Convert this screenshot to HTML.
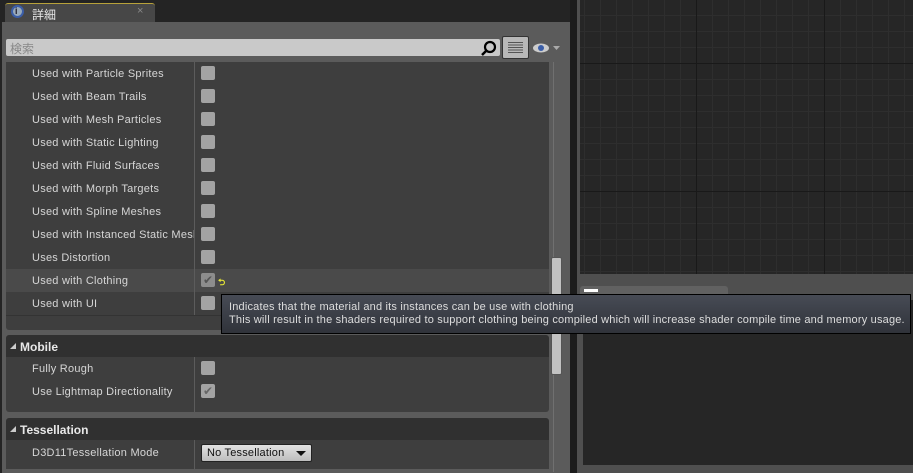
<!DOCTYPE html><html><head><meta charset="utf-8"><style>
*{margin:0;padding:0;box-sizing:border-box}
body{width:913px;height:473px;background:#242424;position:relative;overflow:hidden;font-family:"Liberation Sans","Noto Sans CJK JP",sans-serif;font-size:11px;color:#d6d6d6}
.a{position:absolute}
.row{position:absolute;left:6px;width:543px;height:23px}
.row span{position:absolute;left:26px;top:6px;white-space:nowrap;width:162px;overflow:hidden;letter-spacing:0.25px}
.cb{position:absolute;left:195px;top:4px;width:14px;height:14px;background:#a3a3a3;border-radius:2px}
.vl{position:absolute;left:194px;width:1px;background:#5c5c5c}
.hdr{position:absolute;left:6px;width:543px;height:22px;background:#303030;border-radius:3px 3px 0 0;font-weight:bold;font-size:12px;color:#e8e8e8}
.hdr b{position:absolute;left:14px;top:5px}
.hdr i{position:absolute;left:4px;top:8px;width:0;height:0;border-left:6px solid transparent;border-bottom:6px solid #ccc}
.grid{background-color:#262626;background-image:linear-gradient(#191919 1px,transparent 1px),linear-gradient(90deg,#191919 1px,transparent 1px),linear-gradient(#2e2e2e 1px,transparent 1px),linear-gradient(90deg,#2e2e2e 1px,transparent 1px);background-size:128px 128px,128px 128px,16px 16px,16px 16px;background-position:-12px 63px,-12px 63px,-12px -1px,-12px -1px}
</style></head><body>
<div class="a" style="left:5px;top:3px;width:150px;height:20px;background:#474747;border-top:1px solid #b8a23a;border-radius:3px 3px 0 0"></div>
<div class="a" style="left:11px;top:5px;width:13px;height:13px;border-radius:50%;background:#9ab;border:2px solid #3b5ea8"></div>
<div class="a" style="left:15px;top:6px;font-size:9px;color:#223;font-weight:bold">i</div>
<div class="a" style="left:32px;top:6px;font-size:12px;color:#e6e6e6">詳細</div>
<div class="a" style="left:137px;top:5px;color:#888;font-size:11px">×</div>
<div class="a" style="left:2px;top:22px;width:568px;height:451px;background:#5b5b5b"></div>
<div class="a" style="left:6px;top:39px;width:494px;height:17px;background:#c9c9c9;border-radius:2px"></div>
<div class="a" style="left:10px;top:40px;color:#888;font-size:12px">検索</div>
<svg class="a" style="left:480px;top:39px" width="18" height="18"><circle cx="10" cy="8" r="5" fill="none" stroke="#000" stroke-width="2.2"/><line x1="6" y1="12" x2="2" y2="16" stroke="#000" stroke-width="2.5"/></svg>
<div class="a" style="left:502px;top:36px;width:27px;height:23px;background:#b8b8b8;border:1px solid #333;border-radius:2px"></div>
<div class="a" style="left:508px;top:42px;width:15px;height:11px;background:repeating-linear-gradient(#555 0 1px,transparent 1px 2.5px)"></div>
<svg class="a" style="left:532px;top:41px" width="32" height="14"><ellipse cx="9" cy="7" rx="8" ry="4.5" fill="#ccc"/><circle cx="9" cy="7" r="3" fill="#3b5ea8"/><path d="M21 5h7l-3.5 4z" fill="#aaa"/></svg>
<div class="a" style="left:6px;top:62px;width:543px;height:268px;background:#3e3e3e;border-radius:0 0 3px 3px"></div>
<div class="a" style="left:6px;top:269px;width:543px;height:23px;background:#4a4a4a"></div>
<div class="vl" style="top:62px;height:253px"></div>
<div class="row" style="top:62px"><span>Used with Particle Sprites</span><div class="cb"></div></div>
<div class="row" style="top:85px"><span>Used with Beam Trails</span><div class="cb"></div></div>
<div class="row" style="top:108px"><span>Used with Mesh Particles</span><div class="cb"></div></div>
<div class="row" style="top:131px"><span>Used with Static Lighting</span><div class="cb"></div></div>
<div class="row" style="top:154px"><span>Used with Fluid Surfaces</span><div class="cb"></div></div>
<div class="row" style="top:177px"><span>Used with Morph Targets</span><div class="cb"></div></div>
<div class="row" style="top:200px"><span>Used with Spline Meshes</span><div class="cb"></div></div>
<div class="row" style="top:223px"><span>Used with Instanced Static Mesh</span><div class="cb"></div></div>
<div class="row" style="top:246px"><span>Uses Distortion</span><div class="cb"></div></div>
<div class="row" style="top:269px"><span>Used with Clothing</span><div class="cb" style="background:#8d8d8d;color:#555;font-size:12px;text-align:center;line-height:14px">✔</div><div class="a" style="left:212px;top:6px;color:#ee3;font-size:9px;font-weight:bold">⮌</div></div>
<div class="row" style="top:292px"><span>Used with UI</span><div class="cb"></div></div>
<div class="a" style="left:6px;top:315px;width:543px;height:1px;background:#333"></div>
<div class="hdr" style="top:335px"><i></i><b>Mobile</b></div>
<div class="a" style="left:6px;top:357px;width:543px;height:55px;background:#3e3e3e;border-radius:0 0 3px 3px"></div>
<div class="vl" style="top:357px;height:55px"></div>
<div class="row" style="top:357px"><span>Fully Rough</span><div class="cb"></div></div>
<div class="row" style="top:380px"><span>Use Lightmap Directionality</span><div class="cb" style="color:#666;font-size:12px;text-align:center;line-height:14px">✔</div></div>
<div class="hdr" style="top:418px"><i></i><b>Tessellation</b></div>
<div class="a" style="left:6px;top:440px;width:543px;height:29px;background:#3e3e3e"></div>
<div class="vl" style="top:440px;height:29px"></div>
<div class="row" style="top:441px"><span>D3D11Tessellation Mode</span></div>
<div class="a" style="left:201px;top:444px;width:111px;height:18px;background:linear-gradient(#e2e2e2,#bdbdbd);border:1px solid #222;border-radius:2px;color:#111;padding:2px 0 0 5px;letter-spacing:0.2px">No Tessellation</div>
<div class="a" style="left:296px;top:451px;border-left:5px solid transparent;border-right:5px solid transparent;border-top:5px solid #111"></div>
<div class="a" style="left:553px;top:62px;width:1px;height:410px;background:#707070"></div>
<div class="a" style="left:551px;top:257px;width:11px;height:118px;background:#c2c2c2;border:1px solid #555;border-radius:2px"></div>
<div class="a" style="left:570px;top:0;width:7px;height:473px;background:#1c1c1c"></div>
<div class="a" style="left:577px;top:0;width:336px;height:473px;background:#4f4f4f"></div>
<div class="a grid" style="left:580px;top:0;width:333px;height:274px"></div>
<div class="a" style="left:580px;top:286px;width:148px;height:16px;background:#616161;border-radius:3px 3px 0 0"></div>
<div class="a" style="left:584px;top:289px;width:14px;height:3px;background:#fff"></div>
<div class="a" style="left:583px;top:300px;width:330px;height:165px;background:#262626"></div>
<div class="a" style="left:221px;top:294px;width:690px;height:40px;background:linear-gradient(#474b55,#30333a);border:1px solid #000;color:#ddd;font-size:11px;line-height:12.5px;padding:6px 0 0 7px;white-space:nowrap;letter-spacing:0.19px">Indicates that the material and its instances can be use with clothing<br>This will result in the shaders required to support clothing being compiled which will increase shader compile time and memory usage.</div>
</body></html>
